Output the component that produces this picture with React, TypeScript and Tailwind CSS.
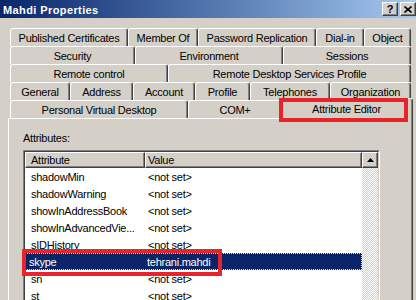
import React from 'react';

type TabDef = { label: string; cls: string };

const row1: TabDef[] = [
  { label: 'Published Certificates', cls: 'w-[118px]' },
  { label: 'Member Of', cls: 'w-[70px]' },
  { label: 'Password Replication', cls: 'w-[118px]' },
  { label: 'Dial-in', cls: 'w-[48px]' },
  { label: 'Object', cls: 'w-[47px]' },
];
const row2: TabDef[] = [
  { label: 'Security', cls: 'w-[125px]' },
  { label: 'Environment', cls: 'w-[148px]' },
  { label: 'Sessions', cls: 'w-[128px]' },
];
const row3: TabDef[] = [
  { label: 'Remote control', cls: 'w-[158px]' },
  { label: 'Remote Desktop Services Profile', cls: 'w-[243px]' },
];
const row4: TabDef[] = [
  { label: 'General', cls: 'w-[60px]' },
  { label: 'Address', cls: 'w-[63px]' },
  { label: 'Account', cls: 'w-[62px]' },
  { label: 'Profile', cls: 'w-[55px]' },
  { label: 'Telephones', cls: 'w-[80px]' },
  { label: 'Organization', cls: 'w-[81px]' },
];
const row5: TabDef[] = [
  { label: 'Personal Virtual Desktop', cls: 'w-[178px]' },
  { label: 'COM+', cls: 'w-[94px]' },
];

const attrs: { name: string; value: string; sel?: boolean }[] = [
  { name: 'shadowMin', value: '<not set>' },
  { name: 'shadowWarning', value: '<not set>' },
  { name: 'showInAddressBook', value: '<not set>' },
  { name: 'showInAdvancedVie...', value: '<not set>' },
  { name: 'sIDHistory', value: '<not set>' },
  { name: 'skype', value: 'tehrani.mahdi', sel: true },
  { name: 'sn', value: '<not set>' },
  { name: 'st', value: '<not set>' },
];

function Tab({ t }: { t: TabDef }) {
  return (
    <div
      className={`${t.cls} h-[18px] shrink-0 whitespace-nowrap rounded-t-[3px] border-l border-t border-r border-white border-r-[#404040] bg-[#d4d0c8] text-center leading-[18px] shadow-[inset_-1px_0_0_#808080]`}
    >
      {t.label}
    </div>
  );
}

function TabRow({ tabs }: { tabs: TabDef[] }) {
  return (
    <div className="flex h-[18px]">
      {tabs.map((t) => (
        <Tab key={t.label} t={t} />
      ))}
    </div>
  );
}

function CaptionBtn({ children }: { children: React.ReactNode }) {
  return (
    <div className="flex h-[14px] w-[16px] items-center justify-center border-l border-t border-r border-b border-white border-r-[#404040] border-b-[#404040] bg-[#d4d0c8] shadow-[inset_-1px_-1px_0_#808080]">
      {children}
    </div>
  );
}

export default function App() {
  return (
    <div className="relative flex h-[300px] w-[416px] flex-col overflow-hidden bg-[#d4d0c8] font-['Liberation_Sans',Arial,sans-serif] text-[11px] tracking-[-0.25px] text-black">
      {/* Title bar */}
      <div className="flex h-[18px] shrink-0 items-start justify-between bg-linear-to-r from-[#0a246a] to-[#a6caf0]">
        <span className="mt-[2px] pl-[3px] text-[11px] font-bold leading-[16px] tracking-[0.4px] text-white">
          Mahdi Properties
        </span>
        <div className="mt-[2px] flex gap-[2px]">
          <CaptionBtn>
            <span className="text-[11px] font-bold leading-[11px] tracking-normal">?</span>
          </CaptionBtn>
          <CaptionBtn>
            <svg width="8" height="7" viewBox="0 0 8 7">
              <path d="M0.5 0.5 L7.5 6.5 M7.5 0.5 L0.5 6.5" stroke="#000" strokeWidth="1.7" />
            </svg>
          </CaptionBtn>
        </div>
      </div>

      {/* Tabs */}
      <div className="flex shrink-0 flex-col pl-[10px] pt-[10px]">
        <TabRow tabs={row1} />
        <TabRow tabs={row2} />
        <TabRow tabs={row3} />
        <TabRow tabs={row4} />
        <div className="flex h-[18px] items-start">
          {row5.map((t) => (
            <Tab key={t.label} t={t} />
          ))}
          <div className="relative z-10 -ml-[2px] -mt-[2px] h-[22px] w-[133px] shrink-0 whitespace-nowrap rounded-t-[3px] border-l border-t border-r border-white border-r-[#404040] bg-[#d4d0c8] text-center leading-[20px] shadow-[inset_-1px_0_0_#808080]">
            Attribute Editor
          </div>
        </div>
      </div>

      {/* Panel */}
      <div className="ml-[8px] flex w-[405px] flex-1 flex-col border-l border-t border-r border-white border-r-[#404040] pl-[14px] pt-[13px] shadow-[inset_-1px_0_0_#808080]">
        <div className="h-[13px] leading-[13px]">Attributes:</div>
        <div className="mt-[5px] h-[200px] w-[357px] shrink-0 border border-[#808080] border-r-white border-b-white">
          <div className="flex h-full border border-[#404040] border-r-[#d4d0c8] border-b-[#d4d0c8] bg-white">
            <div className="flex flex-1 flex-col">
              <div className="flex h-[16px] shrink-0">
                <div className="h-[16px] w-[120px] border-l border-t border-r border-b border-white border-r-[#404040] border-b-[#404040] bg-[#d4d0c8] pl-[5px] leading-[14px] shadow-[inset_-1px_-1px_0_#808080]">
                  Attribute
                </div>
                <div className="h-[16px] flex-1 border-l border-t border-r border-b border-white border-r-[#404040] border-b-[#404040] bg-[#d4d0c8] pl-[2px] leading-[14px] shadow-[inset_-1px_-1px_0_#808080]">
                  Value
                </div>
              </div>
              {attrs.map((a) =>
                a.sel ? (
                  <div
                    key={a.name}
                    className="flex h-[17px] shrink-0 bg-[#0a246a] text-white outline-1 -outline-offset-1 outline-dotted outline-[#e8e8d0]"
                  >
                    <div className="w-[120px] whitespace-nowrap pl-[4px] pt-[2px] leading-[15px]">{a.name}</div>
                    <div className="flex-1 whitespace-nowrap pl-[2px] pt-[2px] leading-[15px]">{a.value}</div>
                  </div>
                ) : (
                  <div key={a.name} className="flex h-[17px] shrink-0">
                    <div className="w-[120px] whitespace-nowrap pl-[6px] pt-[2px] leading-[15px]">{a.name}</div>
                    <div className="flex-1 whitespace-nowrap pl-[3px] pt-[2px] leading-[15px]">{a.value}</div>
                  </div>
                )
              )}
            </div>
            {/* Scrollbar */}
            <div className="flex w-[16px] shrink-0 flex-col">
              <div className="flex h-[16px] shrink-0 items-center justify-center border-l border-t border-r border-b border-white border-r-[#404040] border-b-[#404040] bg-[#d4d0c8] shadow-[inset_-1px_-1px_0_#808080]">
                <svg width="7" height="4" viewBox="0 0 7 4">
                  <path d="M3.5 0 L7 4 L0 4 Z" fill="#000" />
                </svg>
              </div>
              <div className="flex-1 [background:repeating-conic-gradient(#d4d0c8_0%_25%,#ffffff_0%_50%)_0_0/2px_2px]" />
            </div>
          </div>
        </div>
      </div>

      {/* Red annotation boxes */}
      <div className="pointer-events-none absolute left-[279px] top-[98px] z-20 h-[24px] w-[129px] border-4 border-[#e8242b]" />
      <div className="pointer-events-none absolute left-[22px] top-[249px] z-20 h-[27px] w-[200px] border-4 border-[#e8242b]" />
    </div>
  );
}
